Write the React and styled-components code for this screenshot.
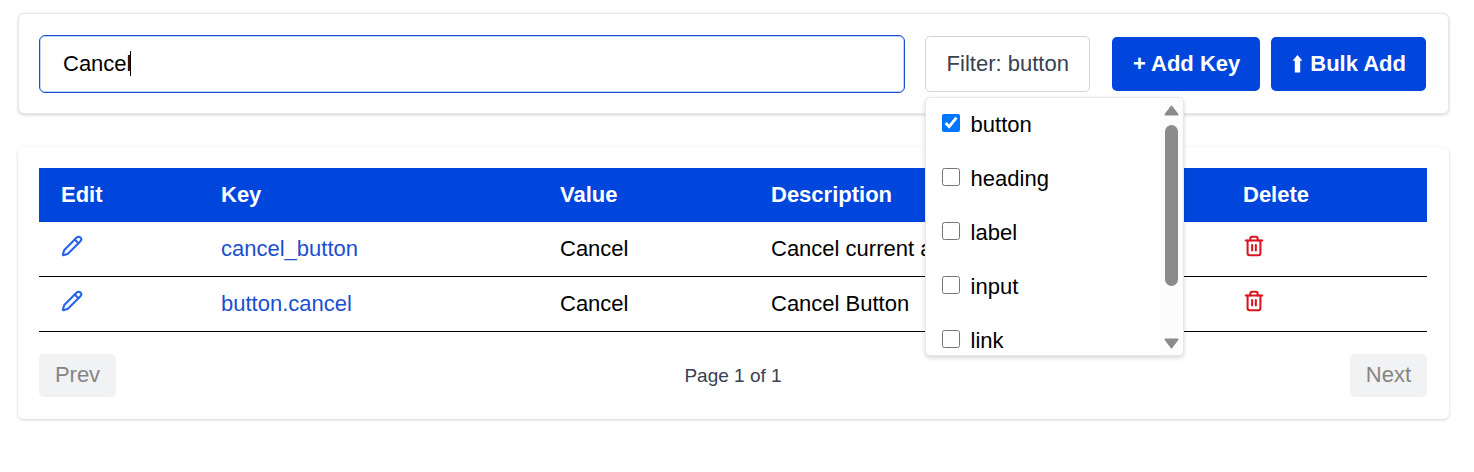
import React, { useState } from 'react';
import styled, { createGlobalStyle, css } from 'styled-components';
import { Pencil, Trash2 } from 'lucide-react';

const GlobalStyle = createGlobalStyle`
  *, *::before, *::after { box-sizing: border-box; }
  body {
    margin: 0;
    background: #fff;
    color: #000;
    font-family: "Liberation Sans", Arial, sans-serif;
    font-size: 22px;
    line-height: 32px;
  }
  button, input { font: inherit; }
`;

const Page = styled.main`
  display: flex;
  flex-direction: column;
  gap: 33px;
  padding: 13px 25px 32px 18px;
`;

const card = css`
  background: #fff;
  border-radius: 6px;
`;

const Toolbar = styled.section`
  ${card}
  display: flex;
  align-items: center;
  padding: 21px 22px 20px 20px;
  border: 1px solid #e5e7eb;
  box-shadow: 0 1px 3px rgba(0, 0, 0, 0.18);
`;

const Panel = styled.section`
  ${card}
  padding: 21px 22px 22px 21px;
  box-shadow: 0 1px 3px rgba(0, 0, 0, 0.18);
`;

const SearchField = styled.div`
  position: relative;
  flex: 1;
  margin-right: 20px;
`;

const SearchInput = styled.input`
  display: block;
  width: 100%;
  height: 58px;
  padding: 0 23px;
  border: 1px solid #1d4ed8;
  border-radius: 6px;
  box-shadow: inset 0 0 0 1px #bcd3fb;
  background: #fff;
  color: #000;
  outline: none;
  caret-color: transparent;
`;

const Caret = styled.span`
  position: absolute;
  top: 16px;
  left: 91px;
  width: 1px;
  height: 25px;
  background: #000;
`;

const FilterWrap = styled.div`
  position: relative;
  margin-right: 22px;
`;

const FilterButton = styled.button`
  display: block;
  height: 56px;
  padding: 0 20px 0 21px;
  border: 1px solid #d1d5db;
  border-radius: 5px;
  background: #fff;
  color: #374151;
  white-space: nowrap;
`;

const Menu = styled.div`
  position: absolute;
  top: 61px;
  left: 0;
  z-index: 2;
  display: flex;
  width: 259px;
  height: 259px;
  border: 1px solid #e5e7eb;
  border-radius: 5px;
  background: #fff;
  box-shadow: 0 2px 4px rgba(0, 0, 0, 0.16);
  overflow: hidden;
`;

const Options = styled.div`
  flex: 1;
  overflow: hidden;
`;

const Option = styled.label`
  display: flex;
  align-items: center;
  gap: 11px;
  height: 54px;
  padding: 0 16px;
`;

const Tick = styled.input`
  width: 18px;
  height: 18px;
  margin: 0 0 4px;
  accent-color: #0075ff;
`;

const ScrollTrack = styled.div`
  display: flex;
  flex-direction: column;
  align-items: center;
  width: 23px;
  padding: 7px 0 6px;
  background: #fcfcfc;
`;

const ScrollThumb = styled.span`
  width: 13px;
  height: 161px;
  margin: 9px 0 auto;
  border-radius: 7px;
  background: #8b8b8b;
`;

const Actions = styled.div`
  display: flex;
  gap: 11px;
`;

const ActionButton = styled.button`
  display: flex;
  align-items: center;
  gap: 7px;
  height: 54px;
  padding: 0 20px 0 21px;
  border: 0;
  border-radius: 5px;
  background: #0046dd;
  color: #fff;
  font-weight: 700;
  white-space: nowrap;
`;

const Table = styled.table`
  width: 100%;
  border-spacing: 0;
  table-layout: fixed;
`;

const HeadCell = styled.th`
  width: ${(p) => p.$width || 'auto'};
  height: 54px;
  padding: 0 22px;
  background: #0046dd;
  color: #fff;
  text-align: left;
`;

const Cell = styled.td`
  height: 55px;
  padding: ${(p) => (p.$icon ? '13px 22px 0' : '0 22px')};
  border-bottom: 1px solid #000;
  vertical-align: ${(p) => (p.$icon ? 'top' : 'middle')};
  white-space: nowrap;
`;

const KeyLink = styled.a`
  color: #1a4fd0;
  text-decoration: none;
`;

const IconButton = styled.button`
  display: block;
  padding: 0;
  border: 0;
  background: none;
  color: ${(p) => p.$color};
  svg { display: block; }
`;

const Pager = styled.nav`
  display: flex;
  align-items: center;
  justify-content: space-between;
  margin-top: 22px;
`;

const PageButton = styled.button`
  width: 77px;
  height: 43px;
  padding: 0 0 2px;
  border: 0;
  border-radius: 5px;
  background: #f1f2f4;
  color: #858585;
`;

const PageStatus = styled.span`
  color: #374151;
  font-size: 19px;
`;

const TYPES = ['button', 'heading', 'label', 'input', 'link'];

const ROWS = [
  { key: 'cancel_button', value: 'Cancel', description: 'Cancel current action' },
  { key: 'button.cancel', value: 'Cancel', description: 'Cancel Button' },
];

function UploadArrow() {
  return (
    <svg width="11" height="18" viewBox="0 0 11 18" fill="currentColor" aria-hidden="true">
      <path d="M5.5 0 L10.4 5.8 H8.2 V17.4 H2.8 V5.8 H0.6 Z" />
    </svg>
  );
}

function ScrollArrow({ down }) {
  return (
    <svg width="15" height="11" viewBox="0 0 15 11" aria-hidden="true">
      <path
        d={down ? 'M1.5 1.5 H13.5 L7.5 9.5 Z' : 'M1.5 9.5 H13.5 L7.5 1.5 Z'}
        fill="#8b8b8b"
        stroke="#8b8b8b"
        strokeWidth="2"
        strokeLinejoin="round"
      />
    </svg>
  );
}

export default function App() {
  const [query, setQuery] = useState('Cancel');
  const [type, setType] = useState('button');

  return (
    <>
      <GlobalStyle />
      <Page>
        <Toolbar>
          <SearchField>
            <SearchInput
              type="text"
              aria-label="Search keys"
              value={query}
              onChange={(e) => setQuery(e.target.value)}
            />
            <Caret />
          </SearchField>
          <FilterWrap>
            <FilterButton type="button" aria-expanded="true">Filter: {type}</FilterButton>
            <Menu>
              <Options>
                {TYPES.map((name) => (
                  <Option key={name}>
                    <Tick type="checkbox" checked={type === name} onChange={() => setType(name)} />
                    {name}
                  </Option>
                ))}
              </Options>
              <ScrollTrack>
                <ScrollArrow />
                <ScrollThumb />
                <ScrollArrow down />
              </ScrollTrack>
            </Menu>
          </FilterWrap>
          <Actions>
            <ActionButton type="button">+ Add Key</ActionButton>
            <ActionButton type="button"><UploadArrow />Bulk Add</ActionButton>
          </Actions>
        </Toolbar>

        <Panel>
          <Table>
            <thead>
              <tr>
                <HeadCell $width="160px">Edit</HeadCell>
                <HeadCell $width="339px">Key</HeadCell>
                <HeadCell $width="211px">Value</HeadCell>
                <HeadCell>Description</HeadCell>
                <HeadCell $width="206px">Delete</HeadCell>
              </tr>
            </thead>
            <tbody>
              {ROWS.map((row) => (
                <tr key={row.key}>
                  <Cell $icon>
                    <IconButton type="button" $color="#2563eb" aria-label={`Edit ${row.key}`}>
                      <Pencil size={22} strokeWidth={2.25} />
                    </IconButton>
                  </Cell>
                  <Cell><KeyLink href="#">{row.key}</KeyLink></Cell>
                  <Cell>{row.value}</Cell>
                  <Cell>{row.description}</Cell>
                  <Cell $icon>
                    <IconButton type="button" $color="#d9141f" aria-label={`Delete ${row.key}`}>
                      <Trash2 size={22} strokeWidth={2.25} />
                    </IconButton>
                  </Cell>
                </tr>
              ))}
            </tbody>
          </Table>
          <Pager>
            <PageButton type="button" disabled>Prev</PageButton>
            <PageStatus>Page 1 of 1</PageStatus>
            <PageButton type="button" disabled>Next</PageButton>
          </Pager>
        </Panel>
      </Page>
    </>
  );
}
